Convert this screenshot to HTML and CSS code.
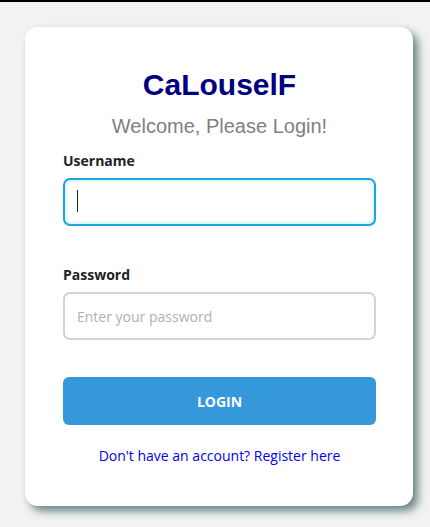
FILE: index.html
```html
<!DOCTYPE html>
<html>
<head>
<meta charset="utf-8">
<link rel="stylesheet" href="styles.css">
</head>
<body>
<div class="topbar"></div>
<main class="page">
  <form class="card">
    <h1 class="title">CaLouselF</h1>
    <p class="subtitle">Welcome, Please Login!</p>
    <div class="field">
      <label class="label" for="u">Username</label>
      <div class="input-wrap focused">
        <input class="input focus" id="u" type="text">
      </div>
    </div>
    <div class="field">
      <label class="label" for="p">Password</label>
      <div class="input-wrap">
        <input class="input" id="p" type="password" placeholder="Enter your password">
      </div>
    </div>
    <button class="btn" type="button">LOGIN</button>
    <a class="link" href="#">Don't have an account? Register here</a>
  </form>
</main>
</body>
</html>
```
FILE: styles.css
```css
* { box-sizing: border-box; }
html, body { margin: 0; padding: 0; }
body {
  background: #f2f2f2;
  font-family: "Open Sans", "Noto Sans", sans-serif;
  height: 527px;
  overflow: hidden;
}
.topbar { height: 2px; background: #000; }
.page {
  display: flex;
  justify-content: flex-start;
  padding: 25px 0 0 25px;
}
.card {
  width: 388px;
  height: 479px;
  background: #fff;
  border-radius: 13px;
  box-shadow: 5px 5px 9px rgba(60, 95, 95, 0.75);
  padding: 40px 37px 0 38px;
  display: flex;
  flex-direction: column;
}
.title {
  margin: 0;
  font-family: "Liberation Sans", Arial, sans-serif;
  font-weight: bold;
  font-size: 30px;
  line-height: 36px;
  color: #000080;
  text-align: center;
}
.subtitle {
  margin: 11px 0 0;
  font-family: "Liberation Sans", Arial, sans-serif;
  font-size: 20px;
  line-height: 24px;
  color: #808080;
  text-align: center;
}
.field { display: flex; flex-direction: column; }
.field + .field { margin-top: 39px; }
.field:first-of-type { margin-top: 13px; }
.label {
  font-weight: bold;
  font-size: 14px;
  line-height: 19px;
  color: #222;
  margin-bottom: 8px;
}
.input-wrap { position: relative; }
.input {
  display: block;
  width: 100%;
  height: 48px;
  border: 2px solid #d3d3d3;
  border-radius: 7px;
  padding: 0 12px;
  font-family: "Open Sans", "Noto Sans", sans-serif;
  font-size: 14px;
  color: #333;
  background: #fff;
  outline: none;
}
.input::placeholder { color: #b0b0b0; }
.input.focus {
  border-color: #1ba5dc;
  box-shadow: inset 0 0 4px rgba(27, 165, 220, 0.35);
}
.focused::after {
  content: "";
  position: absolute;
  left: 14px;
  top: 12px;
  width: 1px;
  height: 22px;
  background: #222;
}
.btn {
  margin-top: 37px;
  height: 48px;
  border: none;
  border-radius: 6px;
  background: #3498db;
  color: #fff;
  font-family: "Open Sans", "Noto Sans", sans-serif;
  font-weight: bold;
  font-size: 14px;
  cursor: pointer;
}
.link {
  margin-top: 21px;
  text-align: center;
  color: #0000ee;
  font-size: 14px;
  line-height: 20px;
  text-decoration: none;
}
```
